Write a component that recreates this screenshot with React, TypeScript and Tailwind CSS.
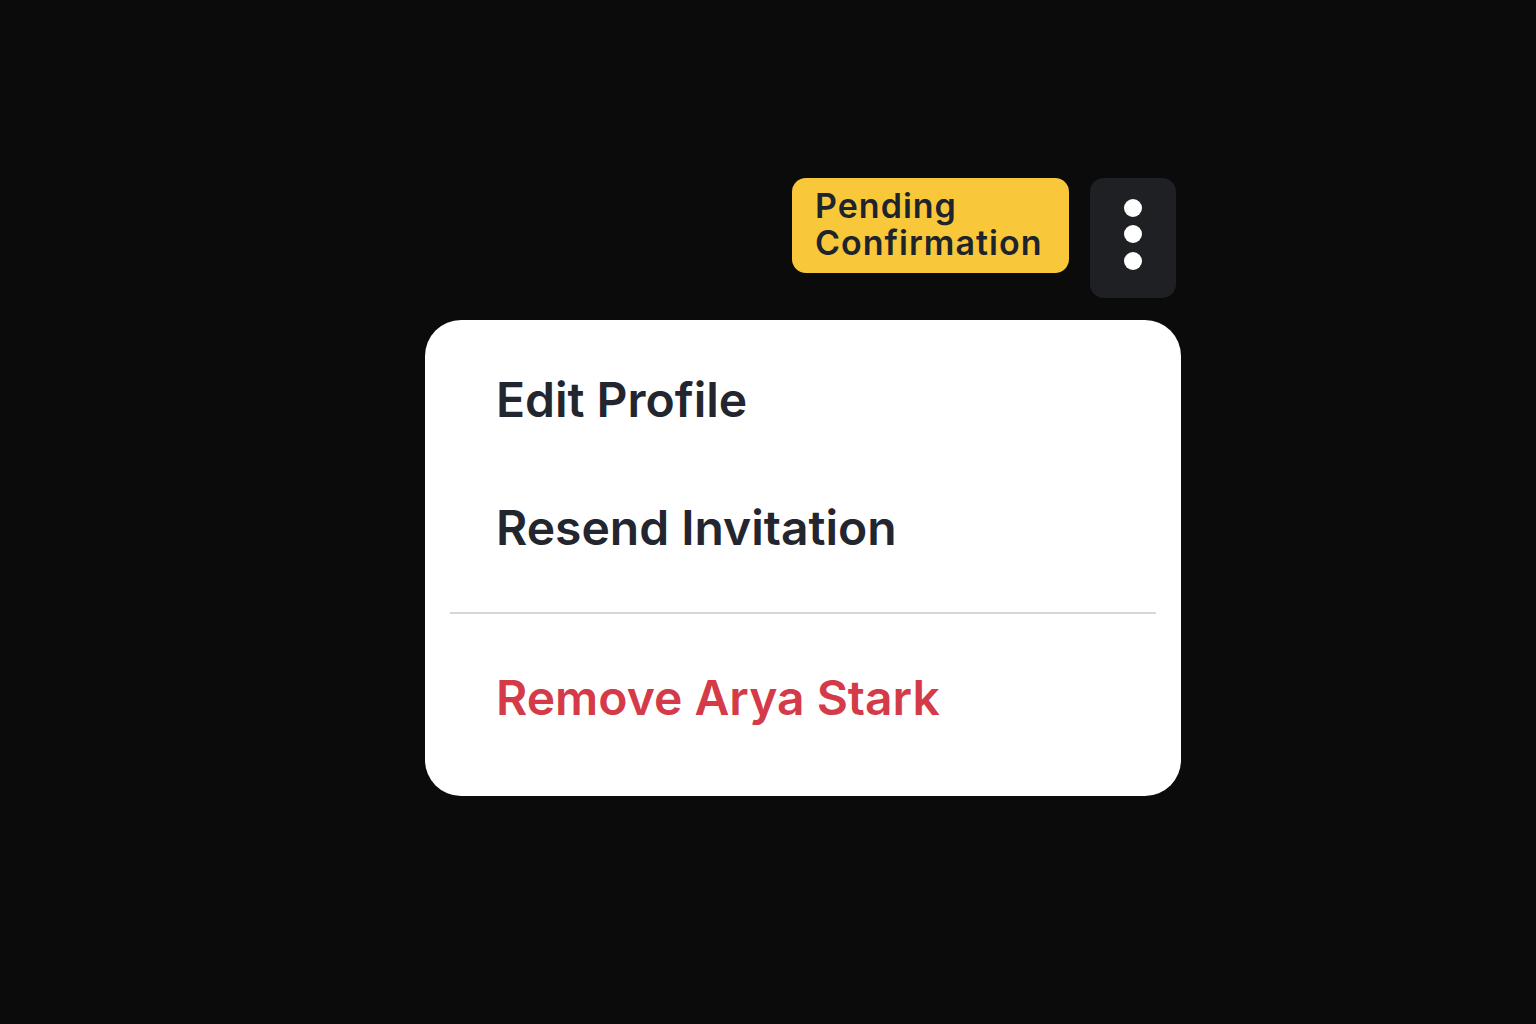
import React from "react";

export default function App() {
  return (
    <div className="min-h-screen w-full bg-[#0b0b0b] font-['Inter','Noto_Sans',sans-serif]">
      <div className="ml-[425px] w-[756px] pt-[178px]">
        <div className="flex items-start justify-end gap-[21px] pr-[5px]">
          <div className="w-[277px] rounded-[14px] bg-[#f8c83a] pl-[23px] pt-[9px] pb-[12px] text-[34px] font-semibold leading-[37px] tracking-[0.03em] text-[#1e242c]">
            <div>Pending</div>
            <div>Confirmation</div>
          </div>
          <button className="flex h-[120px] w-[86px] flex-col items-center justify-start gap-[8.5px] rounded-[14px] bg-[#1f2024] pt-[20.5px]">
            <span className="h-[18px] w-[18px] rounded-full bg-white" />
            <span className="h-[18px] w-[18px] rounded-full bg-white" />
            <span className="h-[18px] w-[18px] rounded-full bg-white" />
          </button>
        </div>
        <div className="mt-[22px] rounded-[36px] bg-white pt-4 pb-[34px]">
          <div className="pl-[71px] pr-[72px] py-10 text-[48px] font-semibold leading-[48px] text-[#23262e]">Edit Profile</div>
          <div className="pl-[71px] pr-[72px] py-10 text-[48px] font-semibold leading-[48px] text-[#23262e]">Resend Invitation</div>
          <div className="mx-[25px] mt-5 h-[2px] bg-[#d6d6d6]" />
          <div className="mt-5 pl-[71px] pr-[72px] py-10 text-[48px] font-semibold leading-[48px] text-[#d53a48]">Remove Arya Stark</div>
        </div>
      </div>
    </div>
  );
}
